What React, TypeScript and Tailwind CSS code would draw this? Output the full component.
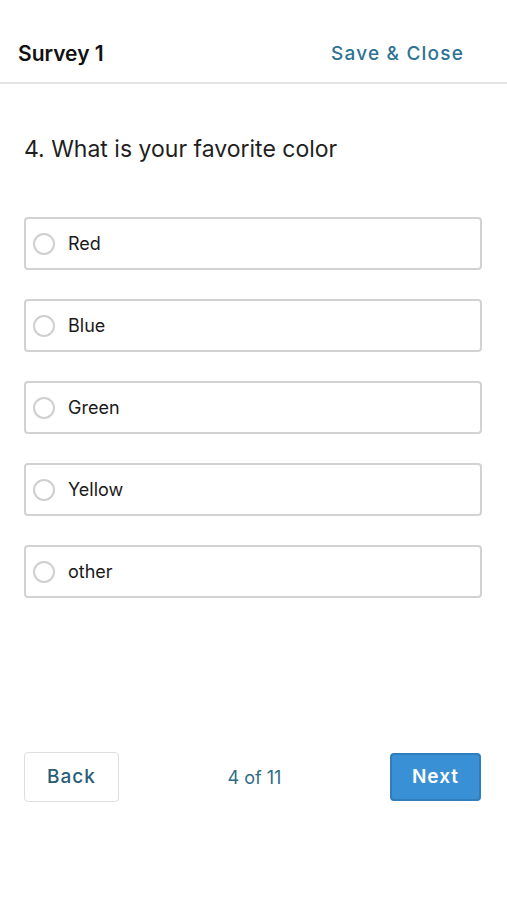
import React from "react";

const options = ["Red", "Blue", "Green", "Yellow", "other"];

export default function App() {
  return (
    <div className="w-[507px] h-[900px] bg-white flex flex-col" style={{ fontFamily: 'Inter, "Liberation Sans", Arial, sans-serif' }}>
      <header className="h-[84px] flex items-center justify-between pl-[18px] pr-[43px] pt-[36px] pb-[10px] border-b-2 border-[#e3e3e3]">
        <span className="text-[21px] font-semibold text-[#111]">Survey 1</span>
        <span className="text-[19px] font-medium text-[#2f7393] tracking-[1.2px]">Save &amp; Close</span>
      </header>
      <div className="px-[24px] pt-[50px]">
        <h1 className="text-[23px] text-[#1f1f1f] leading-[30px]">4. What is your favorite color</h1>
        <div className="mt-[53px] flex flex-col gap-[29px]">
          {options.map((o) => (
            <label key={o} className="h-[53px] w-[458px] border-2 border-[#d2d2d2] rounded-[4px] flex items-center pl-[7px] gap-[13px]">
              <span className="w-[22px] h-[22px] rounded-full border-2 border-[#cfcfcf] bg-white" />
              <span className="text-[18px] text-[#1a1a1a]">{o}</span>
            </label>
          ))}
        </div>
      </div>
      <div className="mt-[154px] pl-[24px] pr-[26px] flex items-center justify-between">
        <button className="w-[95px] h-[50px] border border-[#dedede] rounded-[4px] text-[19px] font-medium text-[#2b5d78] tracking-[1px] bg-white">Back</button>
        <span className="text-[18px] text-[#2f6b86]">4 of 11</span>
        <button className="w-[91px] h-[48px] border-2 border-[#2f7dba] rounded-[4px] bg-[#3a90d4] text-white text-[19px] font-semibold tracking-[1px]">Next</button>
      </div>
    </div>
  );
}
